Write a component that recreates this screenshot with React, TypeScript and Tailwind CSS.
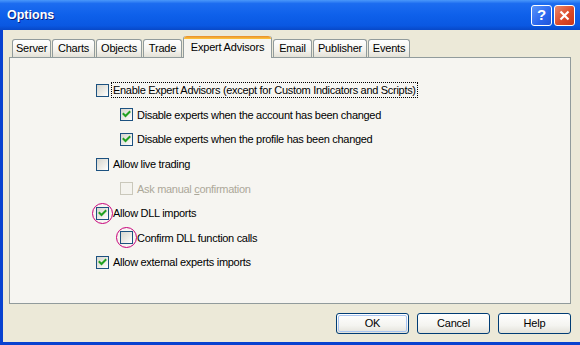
import React from 'react';

const FONT = { fontFamily: '"Liberation Sans", Arial, sans-serif' };

const tabs = ['Server', 'Charts', 'Objects', 'Trade', 'Expert Advisors', 'Email', 'Publisher', 'Events'];
const tabWidths: Record<string, number> = {
  Server: 39, Charts: 43, Objects: 46, Trade: 39, 'Expert Advisors': 89, Email: 39, Publisher: 54, Events: 42,
};

interface Opt {
  label: React.ReactNode;
  checked: boolean;
  indent: boolean;
  disabled?: boolean;
  focus?: boolean;
  ring?: boolean;
}

const options: Opt[] = [
  { label: 'Enable Expert Advisors (except for Custom Indicators and Scripts)', checked: false, indent: false, focus: true },
  { label: 'Disable experts when the account has been changed', checked: true, indent: true },
  { label: 'Disable experts when the profile has been changed', checked: true, indent: true },
  { label: 'Allow live trading', checked: false, indent: false },
  { label: <>Ask manual <span className="underline">c</span>onfirmation</>, checked: false, indent: true, disabled: true },
  { label: 'Allow DLL imports', checked: true, indent: false, ring: true },
  { label: 'Confirm DLL function calls', checked: false, indent: true, ring: true },
  { label: 'Allow external experts imports', checked: true, indent: false },
];

function CheckBox({ checked, disabled, ring }: { checked: boolean; disabled?: boolean; ring?: boolean }) {
  return (
    <div className="relative w-[13px] h-[13px] shrink-0">
      <div
        className={
          disabled
            ? 'w-[13px] h-[13px] border border-[#CAC8BB] bg-[#F4F3EE]'
            : 'w-[13px] h-[13px] border border-[#1C5180] bg-[linear-gradient(135deg,#D6D5CE_0%,#ECEBE6_55%,#FFFFFF_100%)]'
        }
      >
        {checked && (
          <svg width="11" height="11" viewBox="0 0 11 11" className="block">
            <path d="M2.5 5 L4.5 7 L8.5 3" stroke="#21A121" strokeWidth="2" fill="none" strokeLinecap="square" />
          </svg>
        )}
      </div>
      {ring && (
        <div className="absolute -left-[4px] -top-[4px] w-[21px] h-[21px] rounded-full border border-[#C8007A]" />
      )}
    </div>
  );
}

function XpButton({ label, isDefault }: { label: string; isDefault?: boolean }) {
  return (
    <div className="w-[73px] h-[21px] rounded-[3px] border border-[#003C74] bg-[linear-gradient(to_bottom,#FFFFFF_0%,#F4F4F0_60%,#E3E2DA_100%)] p-px">
      <div
        className={
          'w-full h-full rounded-[2px] flex items-center justify-center text-[11px] tracking-[-0.2px] text-black ' +
          (isDefault ? 'border border-[#A9C4F0]' : '')
        }
      >
        {label}
      </div>
    </div>
  );
}

export default function App() {
  return (
    <div className="w-[580px] h-[345px] flex flex-col overflow-hidden bg-[#0842D0]" style={FONT}>
      {/* title bar */}
      <div className="h-[30px] shrink-0 flex items-center justify-between pl-[7px] pr-[5px] bg-[linear-gradient(to_bottom,#4A98FA_0%,#1C6CF0_12%,#0E60EA_50%,#0A58E2_85%,#0848C8_100%)]">
        <span className="text-white font-bold text-[12.5px] [text-shadow:1px_1px_0_#0A1E7A]">Options</span>
        <div className="flex gap-[2px]">
          <div className="w-[21px] h-[21px] rounded-[3px] border border-white bg-[linear-gradient(135deg,#5A95FA_0%,#2A66EE_60%,#1F55D8_100%)] flex items-center justify-center text-white font-bold text-[15px]">
            ?
          </div>
          <div className="w-[21px] h-[21px] rounded-[3px] border border-white bg-[linear-gradient(135deg,#E98A6E_0%,#DD4A28_55%,#C9361A_100%)] flex items-center justify-center">
            <svg width="11" height="11" viewBox="0 0 11 11">
              <path d="M1.5 1.5 L9.5 9.5 M9.5 1.5 L1.5 9.5" stroke="white" strokeWidth="2.2" />
            </svg>
          </div>
        </div>
      </div>

      {/* body */}
      <div className="flex-1 ml-[3px] mb-[3px] bg-[#ECE9D8] pl-[6px] pr-[9px] pt-[6px] flex flex-col">
        {/* tabs */}
        <div className="flex items-end h-[21px] pl-[3px] gap-px relative z-10 text-[11px] tracking-[-0.2px]">
          {tabs.map((t) => {
            const sel = t === 'Expert Advisors';
            return sel ? (
              <div
                key={t}
                className="h-[22px] -mb-px rounded-t-[3px] border-x border-[#919B9C] bg-[#F6F5F1] flex flex-col"
                style={{ width: tabWidths[t] }}
              >
                <div className="h-[3px] rounded-t-[3px] bg-[linear-gradient(to_bottom,#E68B2C,#FFC73C)]" />
                <div className="flex-1 flex items-center justify-center text-black pb-[2px]">{t}</div>
              </div>
            ) : (
              <div
                key={t}
                className="h-[18px] rounded-t-[3px] border border-b-0 border-[#919B9C] bg-[linear-gradient(to_bottom,#FFFFFF_0%,#F4F3EE_60%,#E3E1D7_100%)] flex items-center justify-center text-black"
                style={{ width: tabWidths[t] }}
              >
                {t}
              </div>
            );
          })}
        </div>

        {/* panel */}
        <div className="h-[247px] border border-[#919B9C] bg-[#F6F5F1] pt-[20px] pl-[86px] flex flex-col text-[11px] tracking-[-0.3px] text-black">
          {options.map((o, i) => (
            <div key={i} className={'h-[24.6px] flex items-center ' + (o.indent ? 'pl-[24px]' : '')}>
              <CheckBox checked={o.checked} disabled={o.disabled} ring={o.ring} />
              <span
                className={
                  'ml-[3px] px-[1px] leading-[14px] ' +
                  (o.focus ? 'outline outline-1 outline-dotted outline-black ' : '') +
                  (o.disabled ? 'text-[#ACA899]' : '')
                }
              >
                {o.label}
              </span>
            </div>
          ))}
        </div>

        {/* buttons */}
        <div className="flex justify-end gap-[8px] mt-[9px]">
          <XpButton label="OK" isDefault />
          <XpButton label="Cancel" />
          <XpButton label="Help" />
        </div>
      </div>
    </div>
  );
}
